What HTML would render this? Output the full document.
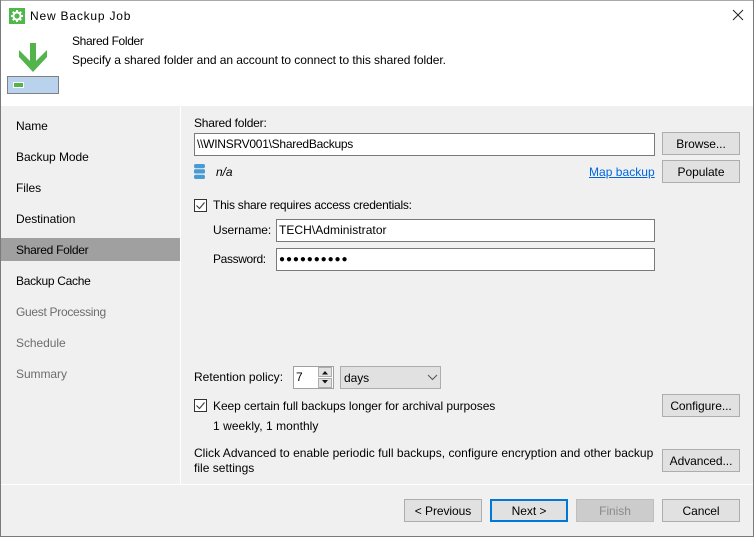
<!DOCTYPE html>
<html><head><meta charset="utf-8"><style>
html,body{margin:0;padding:0;width:754px;height:537px;overflow:hidden;background:#fff}
body{position:relative;font-family:"Liberation Sans",sans-serif;font-size:12px;color:#000}
.t{position:absolute;white-space:nowrap;line-height:14px;letter-spacing:-.06px}
.b{position:absolute;box-sizing:border-box;border:1px solid #adadad;background:#e1e1e1;text-align:center;height:23px;line-height:22px;width:78px;white-space:nowrap;letter-spacing:-.06px}
.i{position:absolute;box-sizing:border-box;border:1px solid #7a7a7a;background:#fff;white-space:nowrap;letter-spacing:-.06px;padding-left:2px}
.r{position:absolute}
.g{color:#6d6d6d}
</style></head><body>
<div class="r" style="left:0;top:106px;width:754px;height:431px;background:#f0f0f0"></div>
<div class="r" style="left:180px;top:106px;width:1px;height:378px;background:#fff"></div>
<div class="r" style="left:1px;top:484px;width:752px;height:1px;background:#fff"></div>
<div class="r" style="left:0;top:0;width:754px;height:1px;background:#a8a8a8"></div>
<div class="r" style="left:0;top:0;width:1px;height:537px;background:#7a7a7a"></div>
<div class="r" style="left:753px;top:0;width:1px;height:537px;background:#7a7a7a"></div>
<div class="r" style="left:0;top:536px;width:754px;height:1px;background:#7a7a7a"></div>

<svg class="r" style="left:9px;top:8px" width="16" height="16" viewBox="0 0 16 16"><rect width="16" height="16" fill="#4fb848"/><circle cx="8" cy="8" r="3.6" fill="none" stroke="#fff" stroke-width="2"/><path d="M8 2v2.500M8 11.500V14M2 8h2.500M11.500 8H14M3.800 3.800l1.800 1.800M10.400 10.400l1.800 1.800M12.200 3.800l-1.800 1.800M5.600 10.400l-1.800 1.800" stroke="#fff" stroke-width="2"/></svg>
<div class="t" style="left:30px;top:9px;letter-spacing:.8px">New Backup Job</div>
<svg class="r" style="left:732px;top:9px" width="12" height="12" viewBox="0 0 12 12"><path d="M1 1l10 10M11 1L1 11" stroke="#222" stroke-width="1" fill="none"/></svg>

<div class="t" style="left:72px;top:34px;letter-spacing:-.35px">Shared Folder</div>
<div class="t" style="left:72px;top:53px">Specify a shared folder and an account to connect to this shared folder.</div>

<svg class="r" style="left:19px;top:43px" width="28" height="29" viewBox="0 0 28 29"><path d="M11 0H17V18L28 7V14L14 29L0 14V7L11 18Z" fill="#52b44b"/></svg>
<div class="r" style="left:7px;top:76px;width:52px;height:18px;box-sizing:border-box;border:1px solid #808080;background:#b9d3ee"></div>
<div class="r" style="left:13px;top:82px;width:11px;height:6px;box-sizing:border-box;border:1px solid #fff;background:#52b44b"></div>

<div class="r" style="left:1px;top:238px;width:179px;height:23px;background:#a0a0a0"></div>
<div class="t" style="left:16px;top:119px">Name</div>
<div class="t" style="left:16px;top:150px">Backup Mode</div>
<div class="t" style="left:16px;top:181px">Files</div>
<div class="t" style="left:16px;top:212px">Destination</div>
<div class="t" style="left:16px;top:243px;letter-spacing:-.28px">Shared Folder</div>
<div class="t" style="left:16px;top:274px;letter-spacing:-.3px">Backup Cache</div>
<div class="t g" style="left:16px;top:305px;letter-spacing:-.3px">Guest Processing</div>
<div class="t g" style="left:16px;top:336px">Schedule</div>
<div class="t g" style="left:16px;top:367px">Summary</div>

<div class="t" style="left:194px;top:116px;letter-spacing:-.2px">Shared folder:</div>
<div class="i" style="left:194px;top:133px;width:461px;height:23px;line-height:21px;letter-spacing:-.26px">\\WINSRV001\SharedBackups</div>
<div class="b" style="left:662px;top:132px">Browse...</div>
<svg class="r" style="left:194px;top:164px" width="12" height="15" viewBox="0 0 12 15"><rect x="0" y="0" width="11" height="4.200" rx="1.800" fill="#4a9bd4"/><rect x="0" y="5.300" width="11" height="4.200" rx="1" fill="#4a9bd4"/><rect x="0" y="10.800" width="11" height="4.200" rx="1.800" fill="#4a9bd4"/></svg>
<div class="t" style="left:216px;top:165px;font-style:italic">n/a</div>
<div class="t" style="left:589px;top:165px;color:#0066e0;text-decoration:underline;letter-spacing:.03px">Map backup</div>
<div class="b" style="left:662px;top:160px">Populate</div>

<svg class="r" style="left:194px;top:199px" width="13" height="13" viewBox="0 0 13 13"><rect x=".5" y=".5" width="12" height="12" fill="#fff" stroke="#333"/><path d="M2.500 6.500l3 3 5-6" fill="none" stroke="#444" stroke-width="1.200"/></svg>
<div class="t" style="left:213px;top:198px;letter-spacing:-.24px">This share requires access credentials:</div>
<div class="t" style="left:213px;top:223px">Username:</div>
<div class="i" style="left:276px;top:219px;width:379px;height:23px;line-height:21px;letter-spacing:.05px">TECH\Administrator</div>
<div class="t" style="left:213px;top:252px;letter-spacing:-.36px">Password:</div>
<div class="i" style="left:276px;top:248px;width:379px;height:23px;line-height:21px;font-size:10px;letter-spacing:.9px;padding-left:2px">●●●●●●●●●●</div>

<div class="t" style="left:194px;top:370px;letter-spacing:.02px">Retention policy:</div>
<div class="i" style="left:293px;top:366px;width:41px;height:23px;line-height:20px;border-color:#a0a0a0">7</div>
<div class="r" style="left:318px;top:367px;width:14px;height:10px;box-sizing:border-box;border:1px solid #adadad;background:#e1e1e1"></div>
<div class="r" style="left:318px;top:378px;width:14px;height:10px;box-sizing:border-box;border:1px solid #adadad;background:#e1e1e1"></div>
<svg class="r" style="left:321px;top:370px" width="9" height="15" viewBox="0 0 9 15"><path d="M4 1L7 4.500H1zM1 10h6l-3 3.500z" fill="#111"/></svg>
<div class="r" style="left:340px;top:366px;width:101px;height:23px;box-sizing:border-box;border:1px solid #adadad;background:#e1e1e1;line-height:22px;padding-left:3px;letter-spacing:-.06px">days</div>
<svg class="r" style="left:427px;top:374px" width="11" height="7" viewBox="0 0 11 7"><path d="M1 1l4.500 4.500L10 1" fill="none" stroke="#555"/></svg>

<svg class="r" style="left:194px;top:399px" width="13" height="13" viewBox="0 0 13 13"><rect x=".5" y=".5" width="12" height="12" fill="#fff" stroke="#333"/><path d="M2.500 6.500l3 3 5-6" fill="none" stroke="#444" stroke-width="1.200"/></svg>
<div class="t" style="left:213px;top:399px">Keep certain full backups longer for archival purposes</div>
<div class="b" style="left:662px;top:394px">Configure...</div>
<div class="t" style="left:213px;top:419px;letter-spacing:.05px">1 weekly, 1 monthly</div>
<div class="t" style="left:194px;top:446px;letter-spacing:.02px">Click Advanced to enable periodic full backups, configure encryption and other backup</div>
<div class="t" style="left:194px;top:461px;letter-spacing:.02px">file settings</div>
<div class="b" style="left:662px;top:449px">Advanced...</div>

<div class="b" style="left:404px;top:499px">&lt; Previous</div>
<div class="b" style="left:490px;top:499px;border:2px solid #0078d7;line-height:20px">Next &gt;</div>
<div class="b" style="left:576px;top:499px;background:#ccc;border-color:#bfbfbf;color:#8a8a8a">Finish</div>
<div class="b" style="left:662px;top:499px">Cancel</div>
</body></html>
